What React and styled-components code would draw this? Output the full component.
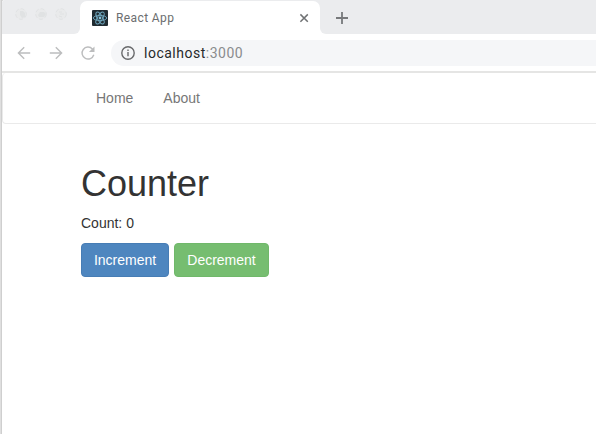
import React, { useState } from "react";
import styled, { createGlobalStyle } from "styled-components";

const GlobalStyle = createGlobalStyle`
  *, *::before, *::after { box-sizing: border-box; }
  body { margin: 0; overflow: hidden; background: #fff; }
`;

const Desktop = styled.div`
  width: 100vw;
  height: 100vh;
  padding-left: 2px;
  background: linear-gradient(90deg, #dfdfdf 0 1px, #cfcfcf 1px 2px);
`;

const BrowserWindow = styled.div`
  height: 100%;
  display: flex;
  flex-direction: column;
  background: #fff;
  border-radius: 3px 0 0 0;
  overflow: hidden;
`;

const TabStrip = styled.div`
  display: flex;
  flex: none;
  height: 34px;
  background: #ebecee;
`;

const WindowControls = styled.div`
  display: flex;
  gap: 8px;
  width: 78px;
  padding: 8px 0 0 13px;
  border-bottom-right-radius: 6px;
  background: #ebecee;
`;

const ControlDot = styled.svg`
  width: 12px;
  height: 12px;
  fill: #e9eaeb;
  stroke: #e0e2e3;
`;

const TabHolder = styled.div`
  width: 240px;
  flex: none;
  background: #ebecee;
`;

const Tab = styled.div`
  display: flex;
  align-items: center;
  height: 33px;
  margin-top: 1px;
  padding: 0 10px 0 12px;
  border-radius: 7px 7px 0 0;
  background: #fff;
`;

const TabTitle = styled.span`
  flex: 1;
  margin-left: 8px;
  font: 12px/16px Roboto, sans-serif;
  letter-spacing: 0.4px;
  color: #6c6e70;
`;

const Gutter = styled.div`
  display: flex;
  flex: ${(p) => (p.$grow ? 1 : "none")};
  background: #fff;
`;

const StripEnd = styled.div`
  flex: 1;
  padding: 10px 0 0 14px;
  border-bottom-left-radius: 6px;
  background: #ebecee;
`;

const Icon = styled.svg`
  display: block;
  flex: none;
  width: ${(p) => p.$size}px;
  height: ${(p) => p.$size}px;
  fill: none;
  stroke: ${(p) => p.$color};
  stroke-width: ${(p) => p.$weight || 1.5};
`;

const Toolbar = styled.div`
  display: flex;
  flex: none;
  align-items: center;
  height: 39px;
  padding-left: 14px;
  border-bottom: 2px solid #e5e5e4;
`;

const NavIcons = styled.div`
  display: flex;
  gap: 16px;
`;

const AddressBar = styled.div`
  display: flex;
  flex: 1;
  align-items: center;
  height: 26px;
  margin-left: 15px;
  padding-left: 9px;
  border-radius: 13px 0 0 13px;
  background: #f5f6f8;
`;

const Url = styled.span`
  margin-left: 8px;
  font: 14px/20px Roboto, sans-serif;
  letter-spacing: 0.5px;
  color: #8a8c8e;
`;

const Host = styled.span`
  color: #27292b;
`;

const Page = styled.main`
  flex: 1;
  font: 14px/20px "Liberation Sans", Arial, sans-serif;
  color: #333;
`;

const Navbar = styled.nav`
  display: flex;
  align-items: center;
  height: 51px;
  padding-left: 93px;
  gap: 30px;
  border: solid #eaeaea;
  border-width: 0 0 1px 1px;
  border-radius: 4px 0 0 4px;
`;

const NavLink = styled.a`
  color: #777;
`;

const Content = styled.section`
  padding: 40px 0 0 79px;
`;

const Title = styled.h1`
  margin: 0 0 9px;
  font-size: 36px;
  font-weight: 400;
  line-height: 40px;
`;

const Count = styled.p`
  margin: 0 0 10px;
`;

const Actions = styled.div`
  display: flex;
  gap: 5px;
`;

const Button = styled.button`
  width: ${(p) => p.$width}px;
  height: 34px;
  padding: 0;
  border: 1px solid ${(p) => p.$edge};
  border-radius: 4px;
  background: ${(p) => p.$fill};
  color: #fff;
  font: inherit;
`;

function ReactLogo() {
  return (
    <svg width="16" height="16" viewBox="0 0 16 16">
      <rect width="16" height="16" rx="1" fill="#202b31" />
      <g fill="none" stroke="#70a9c0" strokeWidth="0.9">
        <ellipse cx="8" cy="8" rx="6.7" ry="2.6" />
        <ellipse cx="8" cy="8" rx="6.7" ry="2.6" transform="rotate(60 8 8)" />
        <ellipse cx="8" cy="8" rx="6.7" ry="2.6" transform="rotate(120 8 8)" />
      </g>
      <circle cx="8" cy="8" r="1.4" fill="#86c2d9" />
    </svg>
  );
}

export default function App() {
  const [count, setCount] = useState(0);
  return (
    <>
      <GlobalStyle />
      <Desktop>
        <BrowserWindow>
          <TabStrip>
            <Gutter>
              <WindowControls>
                {[0, 1, 2].map((i) => (
                  <ControlDot key={i} viewBox="0 0 12 12">
                    <circle cx="6" cy="6" r="5.3" strokeDasharray="4 2" />
                    <path
                      d={["M5 3h3l2 2v4l-3 1-2-3z", "M3 7l2-3h4l2 2-2 3H4z", "M4 4h3M5 6h4M4 8l3 1"][i]}
                      fill="#e0e2e3"
                      stroke={i === 2 ? "#e0e2e3" : "none"}
                    />
                  </ControlDot>
                ))}
              </WindowControls>
            </Gutter>
            <TabHolder>
              <Tab>
                <ReactLogo />
                <TabTitle>React App</TabTitle>
                <Icon $size={12} $color="#707274" viewBox="0 0 12 12">
                  <path d="M2.4 2.4l7.4 7.4M9.8 2.4l-7.4 7.4" />
                </Icon>
              </Tab>
            </TabHolder>
            <Gutter $grow>
              <StripEnd>
                <Icon $size={16} $color="#77797b" $weight={1.8} viewBox="0 0 16 16">
                  <path d="M8 2v12M2 8h12" />
                </Icon>
              </StripEnd>
            </Gutter>
          </TabStrip>
          <Toolbar>
            <NavIcons>
              <Icon $size={16} $color="#bcbdbe" $weight={1.4} viewBox="0 0 16 16">
                <path d="M14.2 8H2.6M8.2 2.2L2.4 8l5.8 5.8" />
              </Icon>
              <Icon $size={16} $color="#bcbdbe" $weight={1.4} viewBox="0 0 16 16">
                <path d="M1.8 8h11.6M7.8 2.2L13.6 8l-5.8 5.8" />
              </Icon>
              <Icon $size={16} $color="#bcbdbe" $weight={1.4} viewBox="0 0 16 16">
                <path d="M13.8 9.8A6 6 0 1 1 12.4 3.9L13.5 5" />
                <path d="M14.5 1.5v5.6H8.9z" fill="#bcbdbe" stroke="none" />
              </Icon>
            </NavIcons>
            <AddressBar>
              <Icon $size={16} $color="#68696b" $weight={1.4} viewBox="0 0 16 16">
                <circle cx="8" cy="8" r="6.2" />
                <path d="M8 7v4.3M8 4.5V6" />
              </Icon>
              <Url><Host>localhost</Host>:3000</Url>
            </AddressBar>
          </Toolbar>
          <Page>
            <Navbar>
              <NavLink>Home</NavLink>
              <NavLink>About</NavLink>
            </Navbar>
            <Content>
              <Title>Counter</Title>
              <Count>Count: {count}</Count>
              <Actions>
                <Button $width={88} $fill="#4e86bf" $edge="#477db5" onClick={() => setCount(count + 1)}>Increment</Button>
                <Button $width={95} $fill="#76bd70" $edge="#70b86a" onClick={() => setCount(count - 1)}>Decrement</Button>
              </Actions>
            </Content>
          </Page>
        </BrowserWindow>
      </Desktop>
    </>
  );
}
